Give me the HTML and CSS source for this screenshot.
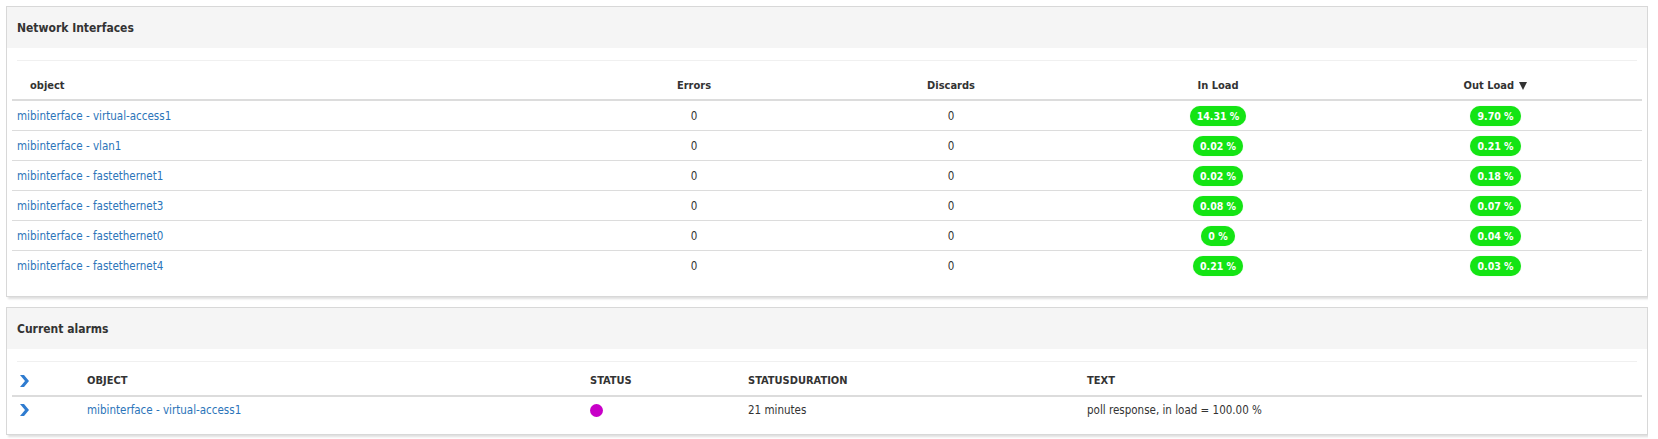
FILE: index.html
```html
<!DOCTYPE html>
<html lang="en">
<head>
    <meta charset="UTF-8">
    <title>Network Interfaces</title>
    <link rel="stylesheet" href="styles.css">
</head>
<body>
    <!-- Interfaces panel -->
    <div class="panel">
        <div class="panel-heading">Network Interfaces</div>
        <div class="panel-body">
            <div class="rule"></div>
            <table class="grid grid-ifaces">
                <colgroup>
                    <col style="width: 561px">
                    <col style="width: 242px">
                    <col style="width: 272px">
                    <col style="width: 262px">
                    <col>
                </colgroup>
                <thead>
                    <tr>
                        <th class="first">object</th>
                        <th class="num">Errors</th>
                        <th class="num">Discards</th>
                        <th class="num">In Load</th>
                        <th class="num">Out Load <span class="sort"></span></th>
                    </tr>
                </thead>
                <tbody>
                    <tr>
                        <td><a href="#">mibinterface - virtual-access1</a></td>
                        <td class="num">0</td>
                        <td class="num">0</td>
                        <td class="num"><span class="badge">14.31 %</span></td>
                        <td class="num"><span class="badge">9.70 %</span></td>
                    </tr>
                    <tr>
                        <td><a href="#">mibinterface - vlan1</a></td>
                        <td class="num">0</td>
                        <td class="num">0</td>
                        <td class="num"><span class="badge">0.02 %</span></td>
                        <td class="num"><span class="badge">0.21 %</span></td>
                    </tr>
                    <tr>
                        <td><a href="#">mibinterface - fastethernet1</a></td>
                        <td class="num">0</td>
                        <td class="num">0</td>
                        <td class="num"><span class="badge">0.02 %</span></td>
                        <td class="num"><span class="badge">0.18 %</span></td>
                    </tr>
                    <tr>
                        <td><a href="#">mibinterface - fastethernet3</a></td>
                        <td class="num">0</td>
                        <td class="num">0</td>
                        <td class="num"><span class="badge">0.08 %</span></td>
                        <td class="num"><span class="badge">0.07 %</span></td>
                    </tr>
                    <tr>
                        <td><a href="#">mibinterface - fastethernet0</a></td>
                        <td class="num">0</td>
                        <td class="num">0</td>
                        <td class="num"><span class="badge">0 %</span></td>
                        <td class="num"><span class="badge">0.04 %</span></td>
                    </tr>
                    <tr>
                        <td><a href="#">mibinterface - fastethernet4</a></td>
                        <td class="num">0</td>
                        <td class="num">0</td>
                        <td class="num"><span class="badge">0.21 %</span></td>
                        <td class="num"><span class="badge">0.03 %</span></td>
                    </tr>
                </tbody>
            </table>
        </div>
    </div>

    <!-- Alarms panel -->
    <div class="panel">
        <div class="panel-heading">Current alarms</div>
        <div class="panel-body panel-body-tight">
            <div class="rule"></div>
            <table class="grid grid-alarms">
                <colgroup>
                    <col style="width: 70px">
                    <col style="width: 503px">
                    <col style="width: 158px">
                    <col style="width: 339px">
                    <col>
                </colgroup>
                <thead>
                    <tr>
                        <th class="chev-cell"><svg class="chev" width="9" height="12" viewBox="0 0 9 12"><polygon points="0,0 4,0 9,6 4,12 0,12 5,6"/></svg></th>
                        <th>OBJECT</th>
                        <th>STATUS</th>
                        <th>STATUSDURATION</th>
                        <th>TEXT</th>
                    </tr>
                </thead>
                <tbody>
                    <tr>
                        <td class="chev-cell"><svg class="chev" width="9" height="12" viewBox="0 0 9 12"><polygon points="0,0 4,0 9,6 4,12 0,12 5,6"/></svg></td>
                        <td><a href="#">mibinterface - virtual-access1</a></td>
                        <td><span class="dot"></span></td>
                        <td>21 minutes</td>
                        <td>poll response, in load = 100.00 %</td>
                    </tr>
                </tbody>
            </table>
        </div>
    </div>
</body>
</html>
```

FILE: styles.css
```css
body {
    margin: 6px 10px 6px 6px;
    font-family: "DejaVu Sans Condensed", "DejaVu Sans", sans-serif;
    font-stretch: condensed;
    font-size: 11.5px;
    color: #333;
    background-color: #fff;
}
a {
    color: #2b74b9;
    text-decoration: none;
}
.panel {
    border: 1px solid #d8d8d8;
    box-shadow: 2px 2px 2px rgba(0, 0, 0, 0.13);
    background-color: #fff;
    margin-bottom: 10px;
}
.panel-heading {
    height: 41px;
    line-height: 43px;
    padding-left: 10px;
    background-color: #f5f5f5;
    font-weight: bold;
    font-size: 12px;
    color: #333;
}
.panel-body {
    padding: 12px 5px 16px;
}
.panel-body-tight {
    padding-bottom: 11px;
}
.rule {
    margin: 0 5px;
    border-top: 1px solid #f0f0f0;
}
.grid {
    width: 100%;
    border-collapse: collapse;
    table-layout: fixed;
}
.grid th {
    text-align: left;
    font-weight: bold;
    font-size: 11px;
    line-height: 14px;
    padding: 18px 5px 6px;
    border-bottom: 2px solid #dcdcdc;
    white-space: nowrap;
}
.grid td {
    height: 29px;
    line-height: 14px;
    padding: 0 5px;
    border-top: 1px solid #dcdcdc;
    white-space: nowrap;
}
.grid tbody tr:first-child td {
    border-top: none;
    height: 29px;
}
.grid .num {
    text-align: center;
}
.grid-ifaces th.first {
    padding-left: 18px;
}
.sort {
    display: inline-block;
    width: 0;
    height: 0;
    margin-left: 2px;
    border-left: 4px solid transparent;
    border-right: 4px solid transparent;
    border-top: 8px solid #333;
    vertical-align: -1px;
}
.badge {
    display: inline-block;
    height: 20px;
    line-height: 20px;
    padding: 0 7px;
    border-radius: 10px;
    background-color: #14e414;
    color: #fff;
    font-weight: bold;
    font-size: 10.5px;
    box-shadow: 0 0 1px #9ef59e;
}
.grid-alarms th {
    padding: 12px 5px 7px;
}
.grid-alarms td {
    height: 26px;
}
.grid-alarms tbody tr:first-child td {
    height: 26px;
}
.chev-cell {
    padding-left: 8px !important;
}
.chev {
    display: block;
    fill: #2f7cd0;
}
.dot {
    display: inline-block;
    width: 13px;
    height: 13px;
    border-radius: 50%;
    background-color: #c800c8;
    vertical-align: middle;
}
```
